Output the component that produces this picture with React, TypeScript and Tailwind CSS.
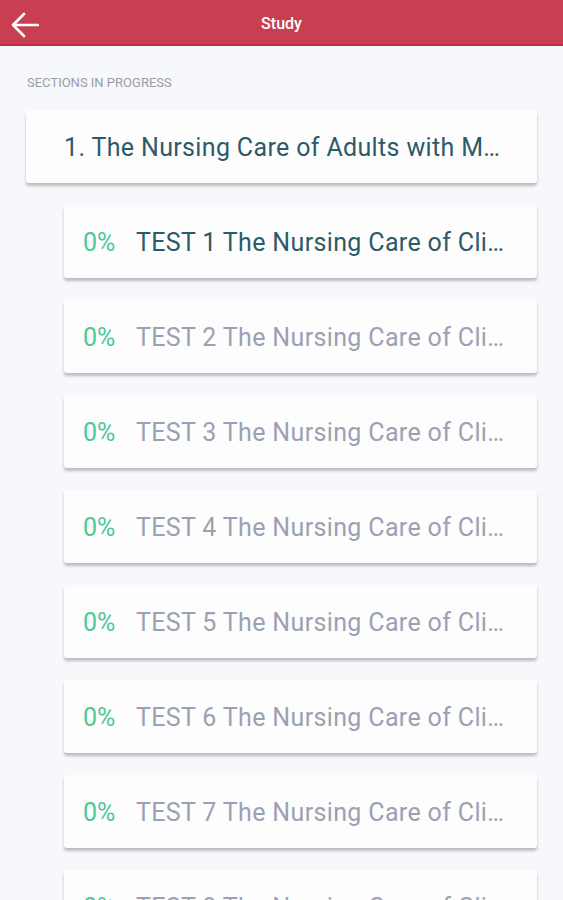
import React from "react";

const tests = [1, 2, 3, 4, 5, 6, 7, 8];

export default function App() {
  return (
    <main
      className="h-[900px] overflow-hidden bg-[#f6f8fb]"
      style={{ fontFamily: "Roboto, 'Liberation Sans', sans-serif" }}
    >
      <header className="relative flex h-[46px] items-center justify-center border-b-2 border-[#b8303f] bg-[#c93f52] pt-[4px]">
        <button className="absolute left-[11px] top-[12px] text-white">
          <svg width="28" height="26" viewBox="0 0 28 26" fill="none">
            <path
              d="M27 13H3M13 2L2 13L13 24"
              stroke="white"
              strokeWidth="2.6"
              strokeLinecap="round"
              strokeLinejoin="round"
            />
          </svg>
        </button>
        <h1
          className="text-[16px] font-medium text-white"
          style={{ fontFamily: "'Liberation Sans Narrow', Roboto, sans-serif" }}
        >
          Study
        </h1>
      </header>

      <p className="mt-[29px] pl-[27px] text-[13px] leading-[16px] text-[#9a9da3]">
        SECTIONS IN PROGRESS
      </p>

      <div className="mx-[26px] mt-[19px] flex h-[73px] items-center rounded-[3px] bg-[#fdfdfd] pl-[38px] pr-[20px] pt-[2px] shadow-[0_3px_3px_rgba(0,0,0,0.24)]">
        <span className="whitespace-nowrap text-[25px] tracking-[0.35px] text-[#2c5a69]">
          1. The Nursing Care of Adults with M…
        </span>
      </div>

      <div className="ml-[64px] mr-[26px] mt-[22px] flex flex-col gap-[22px]">
        {tests.map((n) => (
          <div
            key={n}
            className="flex h-[73px] shrink-0 items-center rounded-[3px] bg-[#fdfdfd] pl-[19px] pr-[20px] pt-[2px] shadow-[0_3px_3px_rgba(0,0,0,0.24)]"
          >
            <span className="w-[53px] shrink-0 text-[25px] text-[#4cc895]">
              0%
            </span>
            <span
              className={
                n === 1
                  ? "whitespace-nowrap text-[25px] tracking-[0.35px] text-[#2c5a69]"
                  : "whitespace-nowrap text-[25px] tracking-[0.35px] text-[#9ba1b2]"
              }
            >
              TEST {n} The Nursing Care of Cli…
            </span>
          </div>
        ))}
      </div>
    </main>
  );
}
